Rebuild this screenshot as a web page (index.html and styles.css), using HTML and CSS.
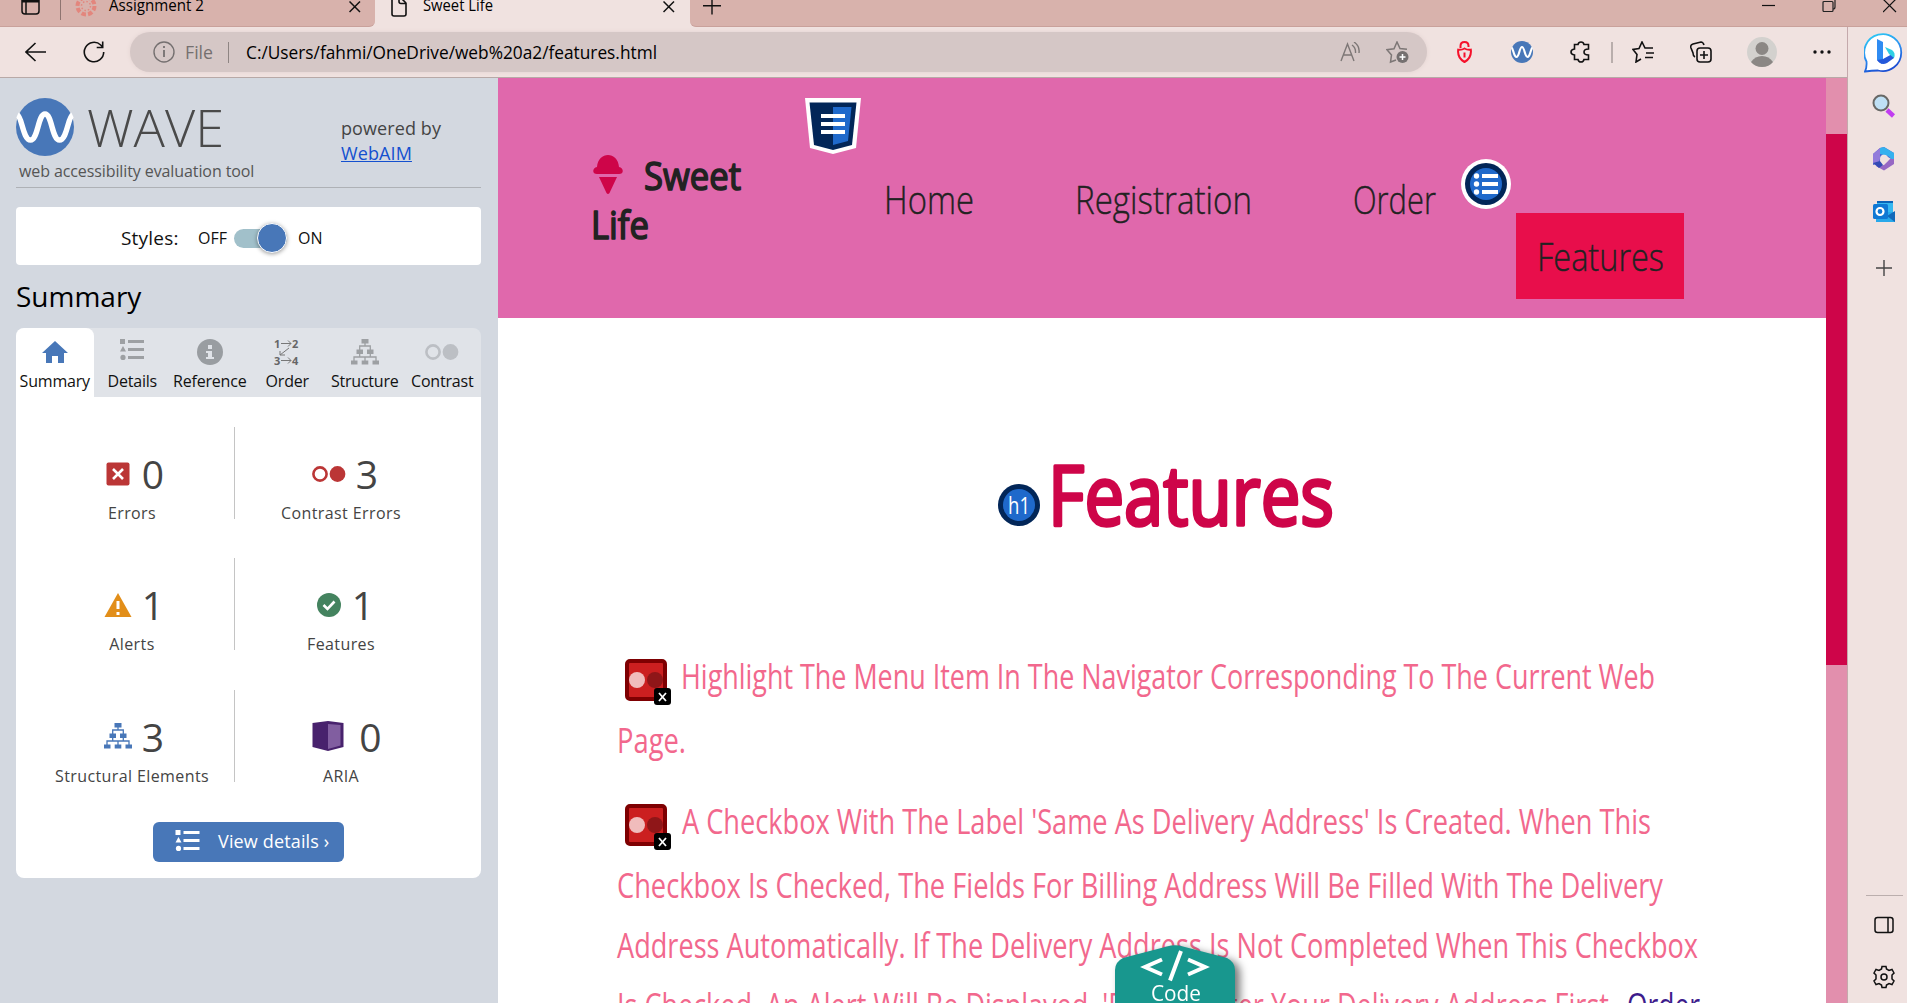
FILE: index.html
```html
<!DOCTYPE html>
<html lang="en">
<head>
<meta charset="utf-8">
<title>Sweet Life</title>
<link rel="stylesheet" href="styles.css">
</head>
<body>
<svg class="defs" width="0" height="0">
  <symbol id="list" viewBox="0 0 24 21"><path d="M0 0h5v5H0zM3 7l3 5.500H0zM8 1h16v3H8zM8 9h16v3H8zM8 17h16v3H8z"/><circle cx="3" cy="18.400" r="2.600"/></symbol>
  <symbol id="tree" viewBox="0 0 28 26"><path d="M10.500 0h7v4.500h-7zM5.500 10.500h6.500v4.500H5.500zM16 10.500h6.500v4.500H16zM0 21.500h6.500v4H0zM10.700 21.500h6.600v4h-6.600zM21.500 21.500h6.500v4h-6.500z"/><path d="M14 4v3M8.700 11V7h10.600v4M3 22v-4h22v4M14 22v-4M8.700 14v4M19.300 14v4" fill="none" stroke="currentColor" stroke-width="1.300"/></symbol>
  <symbol id="rings" viewBox="0 0 34 16"><circle cx="8" cy="8" r="6.600" fill="none" stroke="currentColor" stroke-width="2.600"/><circle cx="25.500" cy="8" r="7.900"/></symbol>
  <symbol id="wave" viewBox="0 0 58 58"><circle cx="29" cy="29" r="29" fill="#4877b8"/><path d="M1.500 17C6 19 7 42 14.500 42S22 16 29 16s7 26 14.500 26S52 19 56.500 17" fill="none" stroke="#fff" stroke-width="5.500"/></symbol>
  <symbol id="contrast" viewBox="0 0 46 46"><rect x="2" y="2" width="38" height="38" rx="3" fill="#cb1f20" stroke="#7e0002" stroke-width="4"/><circle cx="12" cy="21" r="8" fill="#f0bcbc"/><circle cx="30" cy="21" r="8" fill="#8f1618"/><rect x="29" y="29" width="17" height="17" rx="3" fill="#000"/><path d="M34 34l7 8M41 34l-7 8" stroke="#fff" stroke-width="1.800"/></symbol>
</svg>

<div class="tabstrip">
  <div class="tabs-left">
    <svg class="i-panel" width="20" height="20" fill="none" stroke="#111" stroke-width="1.500"><rect x="1" y="-4" width="17" height="18" rx="3"/><path d="M1 1h17" stroke-width="3"/><path d="M5 1v13"/></svg>
    <i class="tick"></i>
    <svg class="i-canvas" width="22" height="22"><circle cx="11" cy="6" r="8.500" fill="none" stroke="#e3867d" stroke-width="4" stroke-dasharray="4.500 2.170"/><circle cx="11" cy="6" r="4.500" fill="none" stroke="#e3867d" stroke-width="1.500" stroke-dasharray="1.500 2"/></svg>
    <svg class="t" width="240" height="27"><text x="-1" y="11" font-size="16.500" textLength="95" lengthAdjust="spacingAndGlyphs">Assignment 2</text></svg>
    <svg width="12" height="12" class="x" stroke="#111" stroke-width="1.500"><path d="M.5.500l10.500 10.500M11 .500L.5 11"/></svg>
  </div>
  <div class="tab-active">
    <svg width="16" height="17" fill="none" stroke="#111" stroke-width="1.600"><path d="M1-2v16q0 2 2 2h10q2 0 2-2V3.500h-5q-2 0-2-2V-3M9-3l6 6"/></svg>
    <svg class="t" width="238" height="27"><text x="0" y="11" font-size="16.500" textLength="70" lengthAdjust="spacingAndGlyphs">Sweet Life</text></svg>
    <svg width="12" height="12" class="x" stroke="#111" stroke-width="1.500"><path d="M.5.500l10.500 10.500M11 .500L.5 11"/></svg>
  </div>
  <div class="tabs-right">
    <svg width="18" height="16" stroke="#111" stroke-width="1.400"><path d="M0 5.700h18M9-4v18.500"/></svg>
    <div class="winbtns">
      <svg width="13" height="14" stroke="#111" stroke-width="1.200"><path d="M0 5.500h13"/></svg>
      <svg width="14" height="14" fill="none" stroke="#222" stroke-width="1.200"><rect x="1" y="1.500" width="10" height="10" rx="1"/><path d="M13 0v7q0 2-2 2" /></svg>
      <svg width="14" height="14" stroke="#111" stroke-width="1.200"><path d="M0-1l13 13M13-1L0 12"/></svg>
    </div>
  </div>
</div>

<div class="shell">
 <div class="main">
  <div class="toolbar">
    <svg class="back" width="22" height="20" fill="none" stroke="#111" stroke-width="1.600"><path d="M1 10h20M10.500 1L1 10l9.500 9"/></svg>
    <svg class="reload" width="22" height="22" fill="none" stroke="#111" stroke-width="1.600"><path d="M20.700 11a9.700 9.700 0 1 1-3-7l2 2M19.700.5v6h-6"/></svg>
    <div class="address">
      <svg class="info" width="22" height="22" fill="none" stroke="#757070" stroke-width="1.400"><circle cx="11" cy="11" r="10"/><path d="M11 9v7M11 5v2" stroke-width="1.800"/></svg>
      <svg class="t file" width="27" height="40"><text x="-1" y="26.500" font-size="18" textLength="28" lengthAdjust="spacingAndGlyphs">File</text></svg>
      <i class="bar"></i>
      <svg class="t url" width="412" height="40"><text x="-1" y="26.500" font-size="18" textLength="411" lengthAdjust="spacingAndGlyphs">C:/Users/fahmi/OneDrive/web%20a2/features.html</text></svg>
      <svg class="read" width="22" height="20" fill="none" stroke="#7d7776" stroke-width="1.400"><path d="M1 19L7.500 2 14 19M3.500 13h8M12 3q4 3 3.500 8M14 0q6 4 5 11"/></svg>
      <svg class="fav" width="24" height="23" fill="none" stroke="#7d7776" stroke-width="1.500"><path d="M10 19l-5.500 2 1-7L1 8.700l7-1L11 1l3 6.500 7 .8"/><circle cx="16.500" cy="16" r="6" fill="#757070" stroke="none"/><path d="M16.500 13v6M13.500 16h6" stroke="#fff"/></svg>
    </div>
    <svg class="lock" width="16" height="22" fill="none" stroke="#f5112b" stroke-width="2"><path d="M3.500 7V5q0-4 4-4t4 4v1M7.500 7.500q3 1.700 6.300 1.200 1 8.300-6.300 12.300Q.2 17 1.200 8.700 4.500 9.200 7.500 7.500z"/><path d="M7.500 11.500v5"/></svg>
    <svg class="wv" width="22" height="22"><use href="#wave"/></svg>
    <svg class="puzzle" width="22" height="22" fill="none" stroke="#111" stroke-width="1.600"><path d="M4.500 3.500H8q.5-2.500 3-2.500t3 2.500h4.500V8q-4.500 0-4.500 3t4.500 3v4.500H14q-.5 2.500-3 2.500t-3-2.500H4.500V14Q1 13.500 1 11t3.500-3z"/></svg>
    <i class="sep"></i>
    <svg class="favs" width="23" height="22" fill="none" stroke="#111" stroke-width="1.600"><path d="M9 18l-5 3 1-7.500L1 8.500l6-1L10 1l3 6h8M14 12h8M13 16.500h8"/></svg>
    <svg class="coll" width="22" height="22" fill="none" stroke="#111" stroke-width="1.600"><path d="M5 16Q3 15 3 12L1 7q-1-3 2-4l8-2q2 0 3 3"/><rect x="7" y="7" width="14" height="14" rx="3"/><path d="M14 10v8M10 14h8"/></svg>
    <svg class="avatar" width="30" height="30"><circle cx="15" cy="15" r="15" fill="#d3d1ce"/><circle cx="15" cy="11.500" r="6.500" fill="#8b8784"/><path d="M4 25q4-6 11-6t11 6q-4 5-11 5T4 25" fill="#8b8784"/></svg>
    <svg class="dots" width="18" height="6" fill="#111"><circle cx="2" cy="3" r="1.700"/><circle cx="9" cy="3" r="1.700"/><circle cx="16" cy="3" r="1.700"/></svg>
  </div>

  <div class="content">
   <aside class="wave">
    <header class="logo">
      <div>
        <div class="mark"><svg width="58" height="58"><use href="#wave"/></svg>
        <svg class="t word" width="136" height="58"><text x="-2" y="49" font-size="52" font-weight="300" textLength="137" lengthAdjust="spacingAndGlyphs">WAVE</text></svg></div>
        <p class="tagline">web accessibility evaluation tool</p>
      </div>
      <p class="powered">powered by<br><a>WebAIM</a></p>
    </header>
    <div class="styles"><b>Styles:</b><span>OFF</span><i class="switch"></i><span>ON</span></div>
    <h2>Summary</h2>
    <nav class="wtabs">
      <a class="on"><svg width="26" height="26" fill="#4877b8"><path d="M13 2L26 14h-4v10h-6v-7h-6v7H4V14H0z"/></svg>Summary</a>
      <a><svg width="24" height="26" fill="#9da0a3"><use href="#list" width="24" height="21"/></svg>Details</a>
      <a><svg width="26" height="26" fill="#999da1"><circle cx="13" cy="13" r="13"/><path d="M11 6h4v4h-4zM9 12h6v6h2v2H9v-2h2v-4H9z" fill="#e0e3e8"/></svg>Reference</a>
      <a><svg class="order" width="26" height="26"><text x="0" y="9">1</text><text x="18" y="9">2</text><text x="0" y="26">3</text><text x="18" y="26">4</text><path d="M7 4.500h10M14 1.500l3 3-3 3M7 21.500h10M14 18.500l3 3-3 3M15 9l-9 7M6 12v4h5" fill="none" stroke="#777"/></svg>Order</a>
      <a><svg class="g" width="28" height="26"><use href="#tree"/></svg>Structure</a>
      <a><svg class="g2" width="34" height="26"><use href="#rings" width="34" height="16" y="5"/></svg>Contrast</a>
    </nav>
    <section class="card">
      <div class="stats">
        <div class="stat"><p><svg width="28" height="28"><rect x="2.500" y="2.500" width="23" height="23" rx="2" fill="#bb3636"/><path d="M9 9l10 10M19 9L9 19" stroke="#fff" stroke-width="2.600"/></svg><b>0</b></p>Errors</div>
        <div class="stat"><p><svg width="34" height="28" class="red"><use href="#rings" width="34" height="16" y="6"/></svg><b>3</b></p>Contrast Errors</div>
        <div class="stat"><p><svg width="28" height="28"><path d="M14 2l13.500 24H.5z" fill="#e28e19"/><path d="M14 10v8M14 21v3" stroke="#fff" stroke-width="3"/></svg><b>1</b></p>Alerts</div>
        <div class="stat"><p><svg width="26" height="28"><circle cx="13" cy="14" r="12" fill="#44835f"/><path d="M7.500 14l4 4 7-7.500" fill="none" stroke="#fff" stroke-width="2.600"/></svg><b>1</b></p>Features</div>
        <div class="stat"><p><svg class="blue" width="28" height="28"><use href="#tree" width="28" height="26" y="1"/></svg><b>3</b></p>Structural Elements</div>
        <div class="stat"><p class="aria"><svg width="32" height="32"><path d="M.5 3L16 1l15.500 2v24L16 31 .5 27z" fill="#48226d"/><path d="M16 4l12.500 1v20.500L16 29z" fill="#815ea0"/></svg><b>0</b></p>ARIA</div>
      </div>
      <a class="btn"><svg width="25" height="21" fill="#fff"><use href="#list"/></svg>View details ›</a>
    </section>
   </aside>

   <main class="site">
    <header class="hero">
      <svg class="shield" width="56" height="57"><path d="M0 0h56l-5 50-23 6L5 50z" fill="#fff"/><path d="M4.500 4.500h47L47 47l-19 5L9 47z" fill="#022658"/><path d="M28 9h18.500L43 43l-15 4z" fill="#1f69cb"/><path d="M16 16h24v4H16zM16 24h24v4H16zM16 32h24v4H16z" fill="#fff"/></svg>
      <svg class="listbadge" width="50" height="50"><circle cx="25" cy="25" r="25" fill="#fff"/><circle cx="25" cy="25" r="21" fill="#022658"/><circle cx="25" cy="25" r="16" fill="#1f69cb"/><g fill="#fff"><circle cx="15.500" cy="17" r="2.700"/><circle cx="15.500" cy="25" r="2.700"/><circle cx="15.500" cy="33" r="2.700"/><path d="M21 15h16v4H21zM21 23h16v4H21zM21 31h16v4H21z"/></g></svg>
      <div class="brand">
        <svg width="30" height="41" fill="#ce0549"><path d="M4 13C5-3 25-3 26 13c5 1 5 7 0 7H4c-5 0-5-6 0-7zM6 23h18l-7.500 16q-1.500 2-3 0z"/></svg>
        <svg class="t sweet" width="96" height="49"><text x="-1" y="36" font-size="38" textLength="97" lengthAdjust="spacingAndGlyphs">Sweet</text></svg>
        <svg class="t life" width="58" height="49"><text x="-2" y="36" font-size="38" textLength="58" lengthAdjust="spacingAndGlyphs">Life</text></svg>
      </div>
      <nav class="menu">
        <svg class="t" width="91" height="86"><text x="-2" y="57.700" textLength="90" lengthAdjust="spacingAndGlyphs">Home</text></svg>
        <svg class="t" width="178" height="86"><text x="-2" y="57.700" textLength="177" lengthAdjust="spacingAndGlyphs">Registration</text></svg>
        <svg class="t" width="84" height="86"><text x="-2" y="57.700" textLength="83" lengthAdjust="spacingAndGlyphs">Order</text></svg>
        <span class="current"><svg class="t" width="128" height="86"><text x="-1" y="57.700" textLength="127" lengthAdjust="spacingAndGlyphs">Features</text></svg></span>
      </nav>
    </header>
    <h1><svg class="hb" width="42" height="42"><circle cx="21" cy="21" r="21" fill="#022658"/><circle cx="21" cy="21" r="16" fill="#1f69cb"/><text x="21" y="29.500" text-anchor="middle" font-size="23" fill="#fff" textLength="22" lengthAdjust="spacingAndGlyphs">h1</text></svg><svg class="t big" width="280" height="80"><text x="-5" y="73.500" font-size="82" textLength="286" lengthAdjust="spacingAndGlyphs">Features</text></svg></h1>
    <div class="copy">
      <p><svg class="c" width="46" height="46"><use href="#contrast"/></svg><svg class="t" width="974" height="64"><text x="-2" y="34.500" textLength="974" lengthAdjust="spacingAndGlyphs">Highlight The Menu Item In The Navigator Corresponding To The Current Web</text></svg></p>
      <p class="end"><svg class="t" width="68" height="80"><text x="-1" y="34.500" textLength="69" lengthAdjust="spacingAndGlyphs">Page.</text></svg></p>
      <p><svg class="c" width="46" height="46"><use href="#contrast"/></svg><svg class="t" width="970" height="64"><text x="-1" y="34.500" textLength="969" lengthAdjust="spacingAndGlyphs">A Checkbox With The Label 'Same As Delivery Address' Is Created. When This</text></svg></p>
      <p><svg class="t" width="1046" height="60"><text x="-1" y="34.500" textLength="1046" lengthAdjust="spacingAndGlyphs">Checkbox Is Checked, The Fields For Billing Address Will Be Filled With The Delivery</text></svg></p>
      <p><svg class="t" width="1081" height="60"><text x="-1" y="34.500" textLength="1081" lengthAdjust="spacingAndGlyphs">Address Automatically. If The Delivery Address Is Not Completed When This Checkbox</text></svg></p>
      <p><svg class="t" width="1082" height="60"><text x="-1" y="35" textLength="999" lengthAdjust="spacingAndGlyphs">Is Checked, An Alert Will Be Displayed, 'Please Enter Your Delivery Address First.</text><text class="visited" x="1009" y="35" textLength="73" lengthAdjust="spacingAndGlyphs">Order</text></svg></p>
    </div>
    <svg class="code" width="128" height="58"><path d="M0 74V25q0-8 8-12L52 1.500q8-2.500 16 0L112 13q8 4 8 12v49z" fill="#18978e"/><path d="M47 14.500L30 22l17 7.500M73 14.500L90 22l-17 7.500M66 6L55 35.500" fill="none" stroke="#fff" stroke-width="4"/><text x="36" y="55.500" font-size="21" fill="#fff" textLength="50" lengthAdjust="spacingAndGlyphs">Code</text></svg>
   </main>
   <div class="scroll"><i></i></div>
  </div>
 </div>

 <aside class="side">
   <svg class="bing" width="40" height="41"><defs><linearGradient id="bg" x1="0" y1="0" x2=".4" y2="1"><stop offset="0" stop-color="#2dd1f5"/><stop offset=".6" stop-color="#2b8df0"/><stop offset="1" stop-color="#1b4fd3"/></linearGradient></defs><path d="M1 39.500q2-4 1.500-10A18.500 18.500 0 1 1 14 38.500Q8 38.500 1 39.500z" fill="#fff" stroke="url(#bg)" stroke-width="1.800"/><path d="M13 7l6 3v18l-1 4-5-4z" fill="#2f8cf2"/><path d="M13 28q4 6 10 3l7-5V21l-11 6z" fill="#2458da"/><path d="M21 15l7 3q4 3 2 8l-5-4z" fill="#2fcfe4"/></svg>
   <svg width="24" height="24"><path d="M15 16l6.500 6" stroke="#c13cf0" stroke-width="4.500"/><circle cx="9" cy="9" r="7.500" fill="#bfe0f5" stroke="#686866" stroke-width="2"/></svg>
   <svg width="24" height="24"><path d="M8 1l4-1 10 6v8l-6-4-5-3-4 9-6 2V7z" fill="#4b62d0"/><path d="M12 0l10 6v8l-6-5-8-2V1z" fill="#35b1ee"/><path d="M22 12v5l-10 6.500L4 19l8-1 6-6z" fill="#9768c4"/><path d="M1 7l7-6v11l-3 7-4-3z" fill="#927bdb"/><path d="M1 16l7-2 3 4-4 3z" fill="#334ab5"/><circle cx="12" cy="11.800" r="4" fill="#f0e2e0"/></svg>
   <svg width="24" height="24"><path d="M5 1h16v12H5z" fill="#35b8f1"/><path d="M5 1h16v2H5z" fill="#0a63b8"/><path d="M4 12h19v10H4z" fill="#28a8ea"/><path d="M23 11v11L15 16z" fill="#1269ba"/><rect x="1" y="4" width="15" height="15" rx="1.500" fill="#0f78d4"/><circle cx="8" cy="11.500" r="3.500" fill="none" stroke="#fff" stroke-width="2.200"/></svg>
   <svg class="plus" width="16" height="16" stroke="#444" stroke-width="1.400"><path d="M0 8h16M8 0v16"/></svg>
   <i class="rule"></i>
   <svg class="sb" width="20" height="18" fill="none" stroke="#111" stroke-width="1.500"><rect x="1" y="1.500" width="18" height="15" rx="2.500"/><path d="M14 2v14"/></svg>
   <svg class="gear" width="24" height="24" fill="none" stroke="#111" stroke-width="1.500"><path d="M9.500 4L10 1.500h4L14.500 4l2.500 1.500 3-1 2 3.500-2 2v4l2 2-2 3.500-3-1-2.500 1.500-.5 2.500h-4L9.500 20 7 18.500l-3 1L2 16l2-2v-4L2 8l2-3.500 3 1z"/><circle cx="12" cy="12" r="3"/></svg>
 </aside>
</div>
</body>
</html>
```
FILE: styles.css
```css
* { box-sizing: border-box; }
body { margin: 0; width: 1907px; height: 1003px; overflow: hidden; background: #f0e2e0; font-family: "Open Sans", sans-serif; color: #111; }
p, h1, h2 { margin: 0; font-weight: 400; }
svg { display: block; flex: none; }
.defs { position: absolute; }
.t { overflow: visible; }

.tabstrip { display: flex; height: 27px; background: #f0e2e0; }
.tabs-left, .tabs-right { background: #d8b2ac; border-bottom: 1px solid #c9a19b; height: 27px; display: flex; align-items: flex-start; }
.tabs-left { width: 375px; border-radius: 0 0 6px 0; padding-left: 21px; }
.tick { width: 1px; height: 20px; background: #8f7470; margin-left: 19px; }
.i-canvas { margin: 0 13px 0 14px; }
.x { margin-top: 1px; margin-left: -1px; }
.tab-active { width: 315px; display: flex; padding-left: 16px; gap: 16px; }
.tab-active .x { margin-left: -14px; }
.tabs-right { flex: 1; border-radius: 0 0 0 6px; padding: 0 10px 0 13px; justify-content: space-between; }
.winbtns { display: flex; gap: 47px; }

.shell { display: flex; height: 976px; }
.main { width: 1848px; display: flex; flex-direction: column; border-right: 1px solid #c4a9ac; }
.toolbar { height: 51px; display: flex; align-items: center; border-bottom: 1px solid #b8a9a7; background: #f0e2e0; }
.back { margin-left: 25px; }
.reload { margin-left: 36px; }
.address { margin-left: 25px; width: 1297px; height: 40px; border-radius: 20px; background: #d5c7c6; display: flex; align-items: center; box-shadow: 0 0 4px #e2d2d0; }
.info { margin-left: 23px; }
.file { margin-left: 11px; fill: #757070; }
.bar { width: 1px; height: 21px; background: #8e8583; margin: 0 18px 0 15px; }
.read { margin-left: auto; }
.fav { margin: 0 17px 0 24px; }
.lock { margin-left: 30px; }
.wv { margin-left: 38px; }
.puzzle { margin-left: 37px; }
.sep { width: 2px; height: 21px; background: #b9aeac; margin: 0 20px 0 19px; }
.favs { margin-left: -1px; }
.coll { margin-left: 35px; }
.avatar { margin-left: 35px; }
.dots { margin-left: 36px; }
.content { flex: 1; display: flex; min-height: 0; }

.wave { width: 498px; background: #d3d8e0; padding: 20px 17px 20px 16px; color: #444; }
.logo { display: flex; justify-content: space-between; height: 90px; border-bottom: 1px solid #aeb1b6; }
.mark { display: flex; gap: 15px; }
.word { fill: #4a4a4a; }
.tagline { font-size: 16px; line-height: 20px; margin: 5px 0 0 3px; letter-spacing: -0.1px; color: #555; white-space: nowrap; }
.powered { font-size: 18px; line-height: 25px; margin-top: 18px; width: 140px; letter-spacing: .1px; }
.powered a { color: #1450cf; text-decoration: underline; }
.styles { margin-top: 19px; height: 58px; background: #fff; border-radius: 4px; display: flex; align-items: center; padding: 4px 0 0 105px; color: #111; font-size: 16px; }
.styles b { font-weight: 400; font-size: 19px; margin-right: 18px; width: 59px; letter-spacing: .2px; }
.switch { width: 53px; height: 19px; border-radius: 10px; margin: 0 11px 0 7px; background: #a1c0ca; display: flex; justify-content: flex-end; align-items: center; }
.switch::after { content: ""; width: 28px; height: 28px; border-radius: 50%; background: #4877b8; border: 1px solid #fff; box-shadow: 0 1px 4px #0006; }
h2 { font-size: 28px; line-height: 40px; color: #000; margin: 11px 0 12px; }
.wtabs { display: flex; height: 69px; background: #e0e3e8; border-radius: 8px 8px 0 0; color: #111; }
.wtabs a { flex: 1 1 0; width: 0; display: flex; flex-direction: column; align-items: center; gap: 6px; padding-top: 11px; font-size: 16px; line-height: 20px; letter-spacing: -0.2px; white-space: nowrap; }
.wtabs .on { background: #fff; border-radius: 8px 8px 0 0; }
.g { fill: #9da0a3; color: #9da0a3; }
.g2 { fill: #bcbfc4; color: #bcbfc4; }
.order { font-size: 11px; font-weight: 700; fill: #666; }
.card { height: 481px; background: #fff; border-radius: 0 0 8px 8px; padding-top: 30px; }
.stats { display: grid; grid-template-columns: 219px 212px; grid-auto-rows: 92px; row-gap: 39.400px; }
.stat { display: flex; flex-direction: column; align-items: center; padding: 17px 0 0; font-size: 16px; line-height: 22px; letter-spacing: .4px; white-space: nowrap; }
.stat:nth-child(odd) { border-right: 1px solid #c4c4c4; padding-left: 14px; }
.stat p { display: flex; align-items: center; gap: 10px; height: 58px; margin-left: 8px; }
.stat p svg { margin-top: 1px; }
.stat:nth-child(odd) p { margin-left: 4px; }
.stat b { font-weight: 400; font-size: 39px; line-height: 58px; padding-top: 2px; color: #444; letter-spacing: 0; }
.stat .aria { gap: 15px; margin-left: 12px; }
.red { fill: #bb3636; color: #bb3636; }
.blue { fill: #4877b8; color: #4877b8; }
.btn { margin: 40px 0 0 137px; width: 191px; height: 40px; border-radius: 6px; background: #4877b8; color: #fff; display: flex; align-items: center; padding: 0 0 2px 22px; gap: 18px; font-size: 18px; letter-spacing: .15px; white-space: nowrap; }

.site { width: 1328px; background: #fff; position: relative; overflow: hidden; }
.hero { height: 240px; background: #e068ac; display: flex; position: relative; }
.shield { position: absolute; left: 307px; top: 20px; }
.listbadge { position: absolute; left: 963px; top: 81px; }
.brand { width: 150px; margin: 76px 0 0 95px; display: grid; grid-template-columns: 52px 98px; align-content: start; fill: #222; stroke: #222; stroke-width: 1.600; stroke-linejoin: round; }
.brand > svg:first-child { stroke: none; }
.life { grid-column: 1 / 3; }
.menu { display: flex; margin: 78px 0 0 143px; font-size: 39px; font-weight: 300; fill: #222; stroke: #222; stroke-width: .4; stroke-linejoin: round; }
.menu svg:nth-child(2) { margin-left: 100px; }
.menu svg:nth-child(3) { margin-left: 100px; }
.current { width: 168px; height: 86px; background: #e80e4b; margin: 57px 0 0 77px; padding-left: 22px; }
h1 { display: flex; margin: 133px 0 0 500px; fill: #ce0549; }
h1 .hb { margin: 33px 13px 0 0; }
.big { stroke: #ce0549; stroke-width: 3.500; stroke-linejoin: round; }
.copy { margin: 123px 0 0 120px; font-size: 34.600px; font-weight: 300; fill: #f2688d; }
.copy p { display: flex; }
.copy .c { margin: 5px 12px 0 7px; }
.copy .end { height: 80.500px; }
.visited { fill: #3d1c8c; }
.code { position: absolute; left: 617px; bottom: 0; filter: drop-shadow(5px 3px 4px #0008); }
.scroll { width: 21px; background: #e28fad; padding-top: 56px; }
.scroll i { display: block; height: 531px; background: #ce0549; }

.side { width: 59px; display: flex; flex-direction: column; align-items: center; padding: 5px 0 14px 13px; }
.side svg { margin-bottom: 29px; }
.side .bing { margin: 0 0 21px; }
.side .plus { margin-top: 7px; }
.rule { width: 37px; height: 1px; background: #bbaead; margin-top: auto; }
.side .sb { margin: 20px 0 31px; }
.side .gear { margin: 0; }
```
